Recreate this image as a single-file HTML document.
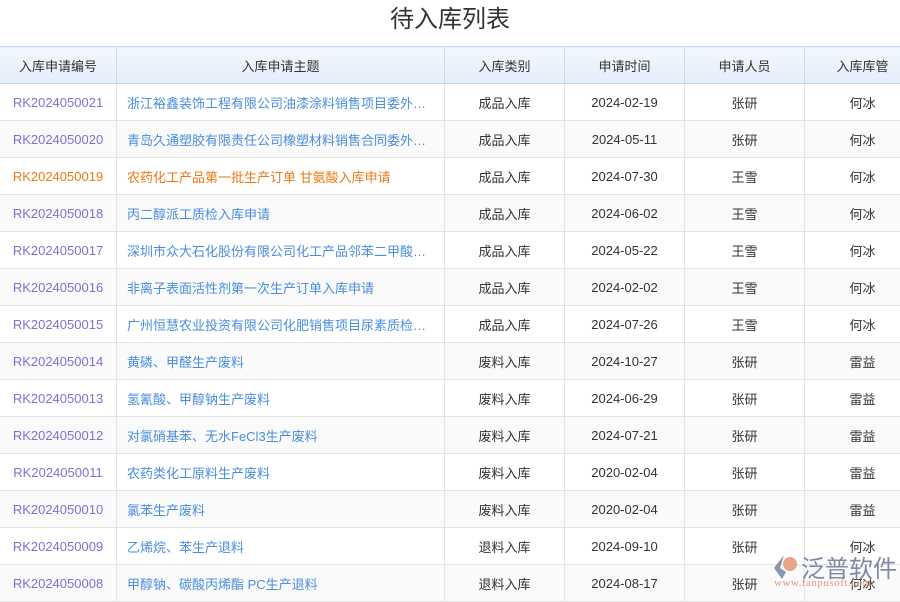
<!DOCTYPE html><html><head><meta charset="utf-8"><style>
body{margin:0;width:900px;height:600px;overflow:hidden;background:#fff;font-family:"Liberation Sans","Noto Sans CJK SC",sans-serif;position:relative}
h1{margin:0;height:46px;line-height:40px;text-align:center;font-size:24px;font-weight:normal;color:#333;}
table{border-collapse:collapse;table-layout:fixed;width:920px;font-size:13px;margin-left:-1px}
td,th{height:36px;border:1px solid #e4e4e4;text-align:center;white-space:nowrap;overflow:hidden;padding:0;color:#333}
th{font-weight:normal;background:linear-gradient(#f3f7fd,#e4eefb);border-color:#c9daf0;height:36px}
tr:nth-child(odd) td{background:#fafafa}
td.id{color:#7b72d6}
td.s{color:#4a8ee0;text-align:left;padding-left:10px}
tr.o td.id,tr.o td.s{color:#ee7a16}
.logo{position:absolute;left:772px;top:553px;}
</style></head><body>
<h1>待入库列表</h1>
<table>
<colgroup><col style="width:117px"><col style="width:328px"><col style="width:120px"><col style="width:120px"><col style="width:120px"><col style="width:116px"></colgroup>
<tr><th>入库申请编号</th><th>入库申请主题</th><th>入库类别</th><th>申请时间</th><th>申请人员</th><th>入库库管</th></tr>
<tr><td class="id">RK2024050021</td><td class="s">浙江裕鑫装饰工程有限公司油漆涂料销售项目委外…</td><td>成品入库</td><td>2024-02-19</td><td>张研</td><td>何冰</td></tr>
<tr><td class="id">RK2024050020</td><td class="s">青岛久通塑胶有限责任公司橡塑材料销售合同委外…</td><td>成品入库</td><td>2024-05-11</td><td>张研</td><td>何冰</td></tr>
<tr class="o"><td class="id">RK2024050019</td><td class="s">农药化工产品第一批生产订单 甘氨酸入库申请</td><td>成品入库</td><td>2024-07-30</td><td>王雪</td><td>何冰</td></tr>
<tr><td class="id">RK2024050018</td><td class="s">丙二醇派工质检入库申请</td><td>成品入库</td><td>2024-06-02</td><td>王雪</td><td>何冰</td></tr>
<tr><td class="id">RK2024050017</td><td class="s">深圳市众大石化股份有限公司化工产品邻苯二甲酸…</td><td>成品入库</td><td>2024-05-22</td><td>王雪</td><td>何冰</td></tr>
<tr><td class="id">RK2024050016</td><td class="s">非离子表面活性剂第一次生产订单入库申请</td><td>成品入库</td><td>2024-02-02</td><td>王雪</td><td>何冰</td></tr>
<tr><td class="id">RK2024050015</td><td class="s">广州恒慧农业投资有限公司化肥销售项目尿素质检…</td><td>成品入库</td><td>2024-07-26</td><td>王雪</td><td>何冰</td></tr>
<tr><td class="id">RK2024050014</td><td class="s">黄磷、甲醛生产废料</td><td>废料入库</td><td>2024-10-27</td><td>张研</td><td>雷益</td></tr>
<tr><td class="id">RK2024050013</td><td class="s">氢氰酸、甲醇钠生产废料</td><td>废料入库</td><td>2024-06-29</td><td>张研</td><td>雷益</td></tr>
<tr><td class="id">RK2024050012</td><td class="s">对氯硝基苯、无水FeCl3生产废料</td><td>废料入库</td><td>2024-07-21</td><td>张研</td><td>雷益</td></tr>
<tr><td class="id">RK2024050011</td><td class="s">农药类化工原料生产废料</td><td>废料入库</td><td>2020-02-04</td><td>张研</td><td>雷益</td></tr>
<tr><td class="id">RK2024050010</td><td class="s">氯苯生产废料</td><td>废料入库</td><td>2020-02-04</td><td>张研</td><td>雷益</td></tr>
<tr><td class="id">RK2024050009</td><td class="s">乙烯烷、苯生产退料</td><td>退料入库</td><td>2024-09-10</td><td>张研</td><td>何冰</td></tr>
<tr><td class="id">RK2024050008</td><td class="s">甲醇钠、碳酸丙烯酯 PC生产退料</td><td>退料入库</td><td>2024-08-17</td><td>张研</td><td>何冰</td></tr>
</table>
<div class="logo">
<svg width="28" height="28" viewBox="0 0 28 28" style="position:absolute;left:0;top:0"><path d="M12 2 L2 15 L10 26 L14 19 L8 15 Z" fill="#8a96b0"/><circle cx="18" cy="11" r="7" fill="#e9a58a"/></svg>
<div style="position:absolute;left:29px;top:-4px;font-size:24px;color:#7d8aa5;white-space:nowrap;letter-spacing:0px">泛普软件</div>
<div style="position:absolute;left:2px;top:24px;font-size:11px;color:#e59b80;white-space:nowrap;font-family:'Liberation Serif',serif;letter-spacing:0.5px">www.fanpusoft.com</div>
</div>
</body></html>
